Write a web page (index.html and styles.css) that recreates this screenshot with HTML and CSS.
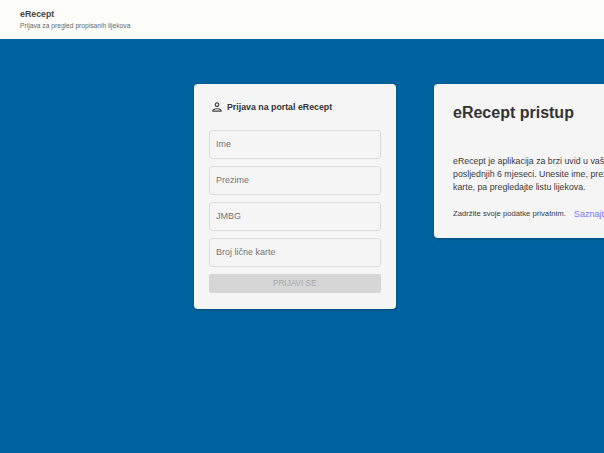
FILE: index.html
```html
<!DOCTYPE html>
<html lang="bs">
<head>
<meta charset="utf-8">
<title>eRecept</title>
<link rel="stylesheet" href="styles.css">
</head>
<body>
<header class="topbar">
  <div class="brand">eRecept</div>
  <div class="tagline">Prijava za pregled propisanih lijekova</div>
</header>
<main class="stage">
  <section class="card login">
    <div class="login-head">
      <svg class="user-icon" viewBox="0 0 24 24" aria-hidden="true"><path d="M12 6c1.1 0 2 .9 2 2s-.9 2-2 2-2-.9-2-2 .9-2 2-2m0 10c2.700 0 5.800 1.290 6 2H6c.230-.720 3.310-2 6-2m0-12C9.790 4 8 5.790 8 8s1.790 4 4 4 4-1.790 4-4-1.790-4-4-4zm0 10c-2.670 0-8 1.340-8 4v2h16v-2c0-2.660-5.330-4-8-4z"/></svg>
      <h2 class="login-title">Prijava na portal eRecept</h2>
    </div>
    <form class="fields">
      <input class="field" type="text" placeholder="Ime">
      <input class="field" type="text" placeholder="Prezime">
      <input class="field" type="text" placeholder="JMBG">
      <input class="field" type="text" placeholder="Broj lične karte">
      <button class="submit" type="button" disabled>PRIJAVI SE</button>
    </form>
  </section>
  <section class="card info">
    <h1 class="info-title">eRecept pristup</h1>
    <p class="info-text">eRecept je aplikacija za brzi uvid u vaše propisane lijekove u posljednjih 6 mjeseci. Unesite ime, prezime, JMBG i broj lične karte, pa pregledajte listu lijekova.</p>
    <div class="info-foot">
      <span class="note">Zadržite svoje podatke privatnim.</span>
      <a class="more" href="#">Saznajte više</a>
    </div>
  </section>
</main>
</body>
</html>
```
FILE: styles.css
```css
* { box-sizing: border-box; }
html, body { margin: 0; height: 100%; overflow: hidden; }
body {
  width: 604px;
  height: 453px;
  display: flex;
  flex-direction: column;
  background: #00639f;
  font-family: "Liberation Sans", Arial, sans-serif;
  color: #333;
}
.topbar {
  height: 39px;
  flex: none;
  padding: 9px 20px 0;
  background: #fdfefa;
}
.brand { font-size: 8.800px; font-weight: 700; line-height: 11px; color: #444; }
.tagline { margin-top: 1px; font-size: 6.700px; line-height: 9px; color: #666; }
.stage {
  flex: 1;
  display: flex;
  align-items: flex-start;
  gap: 38px;
  padding: 45px 0 0 194px;
}
.card {
  flex: none;
  background: #f5f5f5;
  border-radius: 4px;
  box-shadow: 0 1px 3px rgba(0, 0, 0, .25);
}
.login { width: 202px; height: 225px; padding: 15px; }
.login-head { display: flex; align-items: center; gap: 3px; height: 16px; padding-left: 1px; }
.user-icon { width: 14px; height: 14px; fill: #444; flex: none; }
.login-title { margin: 0; font-size: 8.800px; font-weight: 700; color: #333; white-space: nowrap; }
.fields { display: flex; flex-direction: column; gap: 7.400px; margin-top: 15px; }
.field {
  width: 171.500px;
  height: 28.600px;
  padding: 0 6px;
  border: 1px solid #dcdcdc;
  border-radius: 3px;
  background: #f5f5f5;
  font: 9px "Liberation Sans", Arial, sans-serif;
  color: #333;
}
.field::placeholder { color: #757575; opacity: 1; }
.submit {
  height: 19px;
  width: 171.500px;
  border: 0;
  border-radius: 2px;
  background: #d6d6d6;
  color: #a6a6a6;
  font: 8.200px "Liberation Sans", Arial, sans-serif;
  padding: 0;
}
.info { width: 300px; height: 154px; padding: 18px 19px; }
.info-title { margin: 0; font-size: 16px; line-height: 22px; font-weight: 700; color: #333; white-space: nowrap; }
.info-text { margin: 31px 0 0; font-size: 8.800px; line-height: 13px; color: #3a3a3a; }
.info-foot { display: flex; align-items: center; gap: 8px; margin-top: 14.500px; white-space: nowrap; }
.note { font-size: 7.700px; color: #3a3a3a; }
.more { font-size: 9.100px; color: #7a7aff; text-decoration: none; }
```
